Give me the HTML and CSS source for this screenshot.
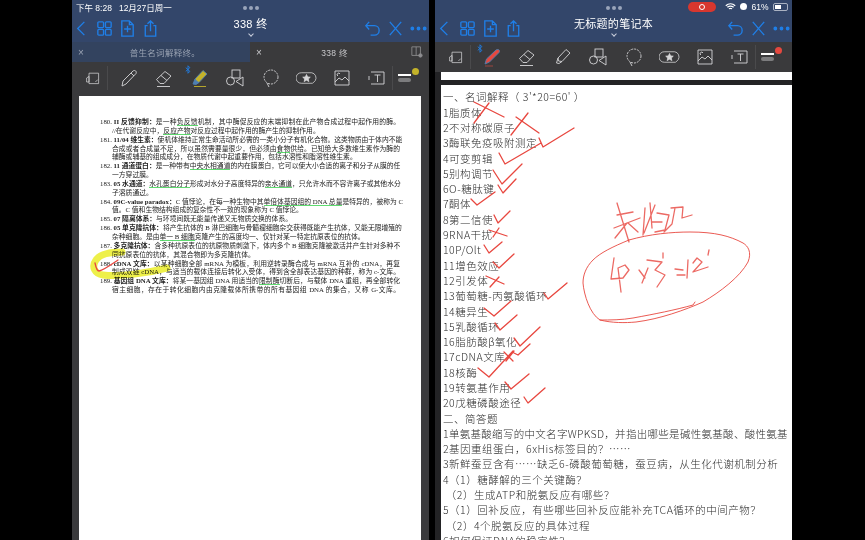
FILE: index.html
```html
<!DOCTYPE html>
<html lang="zh-CN">
<head>
    <meta charset="UTF-8">
    <title>笔记</title>
    <link rel="stylesheet" href="styles.css">
</head>
<body>
    <svg class="defs" width="0" height="0">
        <symbol id="i-back" viewBox="0 0 20 20"><path d="M13 3 6 10l7 7"/></symbol>
        <symbol id="i-grid" viewBox="0 0 20 20"><rect x="3" y="3" width="6" height="6" rx="1"/><rect x="11" y="3" width="6" height="6" rx="1"/><rect x="3" y="11" width="6" height="6" rx="1"/><rect x="11" y="11" width="6" height="6" rx="1"/></symbol>
        <symbol id="i-add" viewBox="0 0 20 20"><path d="M4 2h8l4 4v12H4zM12 2v4h4M10 7v7M6.500 10.500h7"/></symbol>
        <symbol id="i-share" viewBox="0 0 20 20"><path d="M7 7H4.500v11h11V7H13M10 13V2M6.800 5 10 2l3.200 3"/></symbol>
        <symbol id="i-undo" viewBox="0 0 20 20"><path d="M6.500 3 3 7l3.500 4M3 7h9a5 5 0 0 1 0 10H8"/></symbol>
        <symbol id="i-x" viewBox="0 0 20 20"><path d="M4 3l12 14M16 3 4 17"/></symbol>
        <symbol id="i-dots" viewBox="0 0 20 20"><circle cx="3.500" cy="10" r="1.300" class="solid"/><circle cx="10" cy="10" r="1.300" class="solid"/><circle cx="16.500" cy="10" r="1.300" class="solid"/></symbol>
        <symbol id="i-bt" viewBox="0 0 8 12"><path d="M1 3.500 6.500 8.500 4 11V1l2.500 2.500L1 8.500"/></symbol>
        <symbol id="t-reader" viewBox="0 0 20 20"><path d="M5 4h12v13H5zM2 10l3-2v7H2zM13 15l3-3"/></symbol>
        <symbol id="t-eraser" viewBox="0 0 20 20"><path d="M2.500 11.500 11 3.500l6 4.500-7 7.500H6zM7 7.500l6 5M3 18.500h13"/></symbol>
        <symbol id="t-marker" viewBox="0 0 20 20"><path d="M5 11 13 2.500l4 3.500-8 8.500-3.500-.5zM5 11l-1.500 5 2.500.5 3-2"/></symbol>
        <symbol id="t-shapes" viewBox="0 0 20 20"><rect x="7" y="2" width="8" height="8"/><circle cx="5.500" cy="13" r="4"/><path d="M18 9v9l-7-4.500z"/></symbol>
        <symbol id="t-lasso" viewBox="0 0 20 20"><circle cx="10" cy="9" r="7" stroke-dasharray="2 1"/><path d="M6 15l2 4"/></symbol>
        <symbol id="t-star" viewBox="0 0 24 20"><path d="M6 4h12a6 6 0 0 1 4 9l-3 3H6a6 6 0 0 1 0-12z"/><path class="solid" d="m12 6 1.300 2.800 3 .3-2.300 2 .7 3-2.700-1.600-2.700 1.600.7-3-2.300-2 3-.3z"/></symbol>
        <symbol id="t-image" viewBox="0 0 20 20"><path d="M3 3h14v14H3zM3 14l4-4 3 2 3-3 4 4M6 8a1.500 1.500 0 1 1 2-2"/></symbol>
        <symbol id="t-text" viewBox="0 0 20 20"><path d="M4 4h13v12H4M2 8v4"/><path d="M7.500 7h6M10.500 7v7" class="bold"/></symbol>
    </svg>

    <main class="screen">
        <section class="panel">
            <div class="top">
                <div class="status">
                    <span>下午 8:28</span>
                    <span>12月27日周一</span>
                </div>
                <span class="grip"></span>
                <div class="nav">
                    <div class="nav-group">
                        <svg class="nav-icon"><use href="#i-back"/></svg>
                        <svg class="nav-icon"><use href="#i-grid"/></svg>
                        <svg class="nav-icon"><use href="#i-add"/></svg>
                        <svg class="nav-icon"><use href="#i-share"/></svg>
                    </div>
                    <div class="title">338 终<span class="chev"></span></div>
                    <div class="nav-group">
                        <svg class="nav-icon"><use href="#i-undo"/></svg>
                        <svg class="nav-icon"><use href="#i-x"/></svg>
                        <svg class="nav-icon"><use href="#i-dots"/></svg>
                    </div>
                </div>
            </div>
            <div class="tabs">
                <div class="tab"><span class="tab-x">×</span><span class="tab-name">普生名词解释终。</span></div>
                <div class="tab active"><span class="tab-x">×</span><span class="tab-name">338 终</span>
                    <svg class="tab-side" viewBox="0 0 14 14"><path d="M1 1h10v10H1zM6 1v10"/><circle cx="11" cy="11" r="2" class="solid"/></svg>
                </div>
            </div>
            <div class="toolbar">
                <svg class="tool small"><use href="#t-reader"/></svg>
                <span class="sep"></span>
                <svg class="tool" viewBox="0 0 20 20"><path d="M3 18l1-5L14 3c2-1.500 4 .5 3 2.500L7 16z"/><path d="M12 5l3 3"/></svg>
                <svg class="tool"><use href="#t-eraser"/></svg>
                <span class="tool-wrap">
                    <svg class="bt"><use href="#i-bt"/></svg>
                    <svg class="tool" viewBox="0 0 20 20"><path d="M5 11 13 2.500l4 3.500-8 8.500-3.500-.5z" fill="#c3b22a" stroke="#4f7fb0"/><path d="M5 11l-2 5 3 .5 3-2" fill="#4f7fb0" stroke="#4f7fb0"/><path d="M4 18.500h12" stroke="#c3b22a"/></svg>
                </span>
                <svg class="tool"><use href="#t-shapes"/></svg>
                <svg class="tool"><use href="#t-lasso"/></svg>
                <svg class="tool wide"><use href="#t-star"/></svg>
                <svg class="tool"><use href="#t-image"/></svg>
                <svg class="tool"><use href="#t-text"/></svg>
                <span class="sep last"></span>
                <span class="swatch"><span class="dot yellow"></span><i class="bar"></i><i class="bar fat"></i></span>
            </div>
            <div class="sheet-wrap left-wrap">
                <article class="doc">
                    <p class="ln first">180. <b>II 反馈抑制：</b>是一种<u>负反馈</u>机制，其中酶促反应的末端抑制在此产物合成过程中起作用的酶。</p>
                    <p class="ln cont end">//在代谢反应中，<u>反应产物</u>对反应过程中起作用的酶产生的抑制作用。</p>
                    <p class="ln first">181. <b>11/04 维生素：</b>使机体维持正常生命活动所必需的一类小分子有机化合物。这类物质由于体内不能</p>
                    <p class="ln cont">合成或者合成量不足，所以虽然需要量很少，但必须由<u>食物</u>供给。已知绝大多数维生素作为酶的</p>
                    <p class="ln cont end">辅酶或辅基的组成成分，在物质代谢中起重要作用，包括水溶性和脂溶性维生素。</p>
                    <p class="ln first">182. <b>11 通道蛋白：</b>是一种带有<u>中央水相通道</u>的内在膜蛋白，它可以使大小合适的离子和分子从膜的任</p>
                    <p class="ln cont end">一方穿过膜。</p>
                    <p class="ln first">183. <b>05 水通道：</b><u>水孔蛋白分子</u>形成对水分子高度特异的<u>亲水通道</u>，只允许水而不容许离子或其他水分</p>
                    <p class="ln cont end">子溶质通过。</p>
                    <p class="ln first">184. <b>09C-value paradox：</b>C 值悖论，在每一种生物中其<u>单倍体基因组的 DNA 总量</u>是特异的，被称为 C</p>
                    <p class="ln cont end">值。C 值和生物结构组成的复杂性不一致的现象称为 C 值悖论。</p>
                    <p class="ln first end">185. <b>07 隔离体系：</b>与环境间既无能量传递又无物质交换的体系。</p>
                    <p class="ln first">186. <b>05 单克隆抗体：</b>将产生抗体的 B 淋巴细胞与骨髓瘤细胞杂交获得既能产生抗体，又能无限增殖的</p>
                    <p class="ln cont end">杂种细胞。是由<u>单一 B 细胞</u>克隆产生的高度均一、仅针对某一特定抗原表位的抗体。</p>
                    <p class="ln first">187. <b>多克隆抗体：</b>含多种抗原表位的抗原物质刺激下，体内多个 B 细胞克隆被激活并产生针对多种不</p>
                    <p class="ln cont end">同抗原表位的抗体，其混合物即为多克隆抗体。</p>
                    <p class="ln first">188. <b>cDNA 文库：</b>以某种细胞全部 mRNA 为模板，利用逆转录酶合成与 mRNA 互补的 cDNA，再复</p>
                    <p class="ln cont">制成双链 cDNA，与适当的载体连接后转化入受体，得到含全部表达基因的种群，称为 c-文库。</p>
                    <p class="ln first">189. <b>基因组 DNA 文库：</b>将某一基因组 DNA 用适当的<u>限制酶</u>切断后，与载体 DNA 重组，再全部转化</p>
                    <p class="ln cont">宿主细胞，存在于转化细胞内由克隆载体所携带的所有基因组 DNA 的集合，又称 G-文库。</p>
                </article>
                <svg class="ink" viewBox="79 96 342 444">
                    <path class="yellow-ink" d="M122 252C112 252 100 254 96 260 91 267 95 274 103 275 120 277 148 273 167 268"/>
                    <path class="red-ink" d="M95 263C96 268 97 271 99 271 104 270 112 264 118 260"/>
                </svg>
            </div>
        </section>

        <section class="panel">
            <div class="top">
                <div class="status right">
                    <span class="rec"><i></i></span>
                    <svg class="wifi" viewBox="0 0 14 10"><path d="M1 4c3.500-3.200 8.500-3.200 12 0M3 6c2.500-2 5.500-2 8 0M5 8c1.200-.8 2.800-.8 4 0"/></svg>
                    <span class="moon"></span>
                    <span>61%</span>
                    <span class="battery"><i></i></span>
                </div>
                <span class="grip"></span>
                <div class="nav">
                    <div class="nav-group">
                        <svg class="nav-icon"><use href="#i-back"/></svg>
                        <svg class="nav-icon"><use href="#i-grid"/></svg>
                        <svg class="nav-icon"><use href="#i-add"/></svg>
                        <svg class="nav-icon"><use href="#i-share"/></svg>
                    </div>
                    <div class="title">无标题的笔记本<span class="chev"></span></div>
                    <div class="nav-group">
                        <svg class="nav-icon"><use href="#i-undo"/></svg>
                        <svg class="nav-icon"><use href="#i-x"/></svg>
                        <svg class="nav-icon"><use href="#i-dots"/></svg>
                    </div>
                </div>
            </div>
            <div class="toolbar short">
                <svg class="tool small"><use href="#t-reader"/></svg>
                <span class="sep"></span>
                <span class="tool-wrap">
                    <svg class="bt"><use href="#i-bt"/></svg>
                    <svg class="tool" viewBox="0 0 20 20"><path d="M3 17l1.500-5L14 3c2.500-1.500 4.500.5 3 2.500L7.500 15z" fill="#e5483f" stroke="#4f7fb0"/><path d="M3 19h8" stroke="#a8483f"/></svg>
                </span>
                <svg class="tool"><use href="#t-eraser"/></svg>
                <svg class="tool"><use href="#t-marker"/></svg>
                <svg class="tool"><use href="#t-shapes"/></svg>
                <svg class="tool"><use href="#t-lasso"/></svg>
                <svg class="tool wide"><use href="#t-star"/></svg>
                <svg class="tool"><use href="#t-image"/></svg>
                <svg class="tool"><use href="#t-text"/></svg>
                <span class="sep last"></span>
                <span class="swatch"><span class="dot red"></span><i class="bar"></i><i class="bar fat"></i></span>
            </div>
            <div class="sheet-wrap">
                <div class="sheet-end"></div>
                <article class="notes">
                    <p>一、名词解释（ 3'*20=60' ）</p>
                    <p>1脂质体</p>
                    <p>2不对称碳原子</p>
                    <p>3酶联免疫吸附测定</p>
                    <p>4可变剪辑</p>
                    <p>5别构调节</p>
                    <p>6O-糖肽键</p>
                    <p>7酮体</p>
                    <p>8第二信使</p>
                    <p>9RNA干扰</p>
                    <p>10P/Olt</p>
                    <p>11增色效应</p>
                    <p>12引发体</p>
                    <p>13葡萄糖-丙氨酸循环</p>
                    <p>14糖异生</p>
                    <p>15乳酸循环</p>
                    <p>16脂肪酸β氧化</p>
                    <p>17cDNA文库</p>
                    <p>18核酶</p>
                    <p>19转氨基作用</p>
                    <p>20戊糖磷酸途径</p>
                    <p>二、简答题</p>
                    <p class="tight">1单氨基酸缩写的中文名字WPKSD，并指出哪些是碱性氨基酸、酸性氨基</p>
                    <p>2基因重组蛋白，6xHis标签目的？……</p>
                    <p>3新鲜蚕豆含有……缺乏6-磷酸葡萄糖，蚕豆病，从生化代谢机制分析</p>
                    <p>4（1）糖酵解的三个关键酶？</p>
                    <p>&nbsp;（2）生成ATP和脱氨反应有哪些？</p>
                    <p>5（1）回补反应，有些哪些回补反应能补充TCA循环的中间产物？</p>
                    <p>&nbsp;（2）4个脱氨反应的具体过程</p>
                    <p>6如何保证DNA的稳定性？</p>
                </article>
                <svg class="ink" viewBox="435 72 357 468">
                    <g class="red-ink">
                        <path d="M474 102 504 117M489 103 474 123M528 113 511 135M516 117 539 133"/>
                        <path d="M539 138 543 147 574 128M499 153 505 164 541 143M493 170 502 184 522 164M498 185 503 193 516 179M471 199 477 205 495 192M494 215 498 223 510 211"/>
                        <path d="M489 230 507 236M499 228 493 237"/>
                        <path d="M484 245 489 253 502 242M493 262 499 268 514 254M486 276 504 284M499 277 490 287"/>
                        <path d="M544 293 548 299 567 283M484 308 494 316 511 301M495 323 500 330 517 315M514 338 520 346 540 327"/>
                        <path d="M504 352 513 361M514 351 506 361M514 353 518 355 530 344M478 368 489 377 513 351M505 382 511 389 529 374M524 397 528 403 545 388"/>
                        <path class="soft" d="M617 203 629 242M617 215 633 212M614 228 640 218M628 223 638 232M627 223 615 238"/>
                        <path class="soft" d="M645 208 643 235M650 203 652 228M655 205 644 233M657 213 669 215 665 230 655 232M652 222 662 222M671 208 683 207 682 218 692 215M675 208 672 224 664 232"/>
                        <path class="soft" d="M614 258 611 279 623 278 629 270 625 265 618 268 621 292M639 270 645 278M648 268 642 283M647 260 662 262 655 270 665 275 657 287M663 253 663 258M675 269 683 270M677 275 685 275M688 260 687 278M693 263 697 258 702 262 693 272 708 267M709 250 708 255"/>
                        <path class="thin" d="M629 240C612 247 600 253 593 260 586 267 583 275 583 283 584 295 590 314 600 320 612 323 625 323 636 322 660 319 685 310 703 302 720 292 740 277 748 262 752 252 748 246 743 243 730 236 715 232 690 232 672 232 650 234 629 240"/>
                        <path class="thin" d="M600 320C610 320 622 320 633 318 655 314 675 310 693 305L695 302"/>
                    </g>
                </svg>
            </div>
        </section>
    </main>
</body>
</html>
```
FILE: styles.css
```css
* {
    box-sizing: border-box;
}

html, body {
    margin: 0;
    height: 100%;
    background: #000;
    overflow: hidden;
}

body {
    font-family: "Liberation Sans", "Noto Sans CJK SC", sans-serif;
    color: #fff;
}

p {
    margin: 0;
}

.defs {
    position: absolute;
}

.screen {
    display: flex;
    gap: 6px;
    width: 720px;
    height: 540px;
    margin-left: 72px;
}

.panel {
    display: flex;
    flex-direction: column;
    width: 357px;
    height: 540px;
    background: #3a3a3c;
}

/* status + nav */
.top {
    position: relative;
    height: 42px;
    padding: 0 1.500px 0 0;
    background: #33466a;
}

.status {
    display: flex;
    gap: 7px;
    height: 13px;
    padding: 0 3px 0 4px;
    align-items: center;
    font-size: 8.500px;
}

.status.right {
    justify-content: flex-end;
    gap: 4px;
}

.grip {
    position: absolute;
    left: 171px;
    top: 6px;
    width: 4px;
    height: 4px;
    border-radius: 50%;
    background: #9aa5ba;
    box-shadow: 6px 0 #9aa5ba, 12px 0 #9aa5ba;
}

.rec {
    display: flex;
    align-items: center;
    justify-content: center;
    width: 28px;
    height: 10px;
    margin-right: 5px;
    border-radius: 5px;
    background: #d8372f;
}

.rec i {
    width: 6px;
    height: 6px;
    border: 1.500px solid #fff;
    border-radius: 50%;
}

.wifi {
    width: 11px;
    height: 9px;
    fill: none;
    stroke: #fff;
    stroke-width: 1.500;
}

.moon {
    width: 7px;
    height: 7px;
    border-radius: 50%;
    background: #fff;
}

.battery {
    display: block;
    width: 15px;
    height: 8px;
    padding: 1px;
    border: 1px solid #aab2c2;
    border-radius: 2px;
}

.battery i {
    display: block;
    width: 60%;
    height: 100%;
    background: #fff;
}

.nav {
    display: flex;
    justify-content: space-between;
    align-items: center;
    height: 28px;
    margin-top: 1px;
}

.nav-group {
    display: flex;
    gap: 4px;
    color: #1f7fe8;
}

.nav-icon {
    width: 19px;
    height: 19px;
    fill: none;
    stroke: #1f7fe8;
    stroke-width: 1.400;
}

.solid {
    fill: currentColor;
}

.title {
    position: absolute;
    left: 0;
    right: 0;
    top: 16px;
    font-size: 11px;
    line-height: 16px;
    text-align: center;
    letter-spacing: 0.300px;
}

.chev {
    display: block;
    width: 4px;
    height: 4px;
    margin: 0 auto;
    border-right: 1px solid #c8cedb;
    border-bottom: 1px solid #c8cedb;
    transform: rotate(45deg);
}

/* tabs (left panel only) */
.tabs {
    display: flex;
    height: 20px;
    background: #33435f;
    font-size: 8.500px;
    color: #9aa3b3;
}

.tab {
    display: flex;
    flex: 1;
    align-items: center;
    padding-left: 6px;
}

.tab.active {
    flex: 0 0 179px;
    background: #3a3a3c;
    color: #c9c9cc;
}

.tab-x {
    font-size: 10px;
}

.tab-name {
    flex: 1;
    text-align: center;
    padding-right: 4px;
    letter-spacing: 0.300px;
}

.tab-side {
    width: 12px;
    height: 12px;
    margin-right: 6px;
    fill: none;
    stroke: #8d8d90;
    color: #8d8d90;
}

/* toolbar */
.toolbar {
    display: flex;
    align-items: center;
    height: 32px;
    padding-left: 13px;
    background: #3a3a3c;
}

.toolbar.short {
    height: 30px;
}

.tool {
    width: 20px;
    height: 20px;
    margin: 0 7.750px;
    flex: none;
    fill: none;
    stroke: #d6d6d8;
    stroke-width: 0.900;
    color: #d6d6d8;
}

.tool .bold {
    stroke-width: 2;
}

.tool.small {
    width: 16px;
    height: 16px;
    margin: 0;
}

.tool.wide {
    width: 21px;
    margin: 0 7.250px;
}

.tool-wrap {
    position: relative;
    display: flex;
}

.bt {
    position: absolute;
    left: 3px;
    top: -3px;
    width: 6px;
    height: 9px;
    fill: none;
    stroke: #1f7fe8;
    stroke-width: 1.200;
}

.sep {
    width: 1px;
    height: 24px;
    margin: 0 3px 0 6px;
    background: #4a4a4c;
}

.sep.last {
    margin: 0 5px 0 -3px;
}

.swatch {
    position: relative;
    display: flex;
    flex-direction: column;
    gap: 2px;
    width: 22px;
}

.bar {
    display: block;
    width: 13px;
    height: 2px;
    background: #fff;
}

.bar.fat {
    height: 4px;
    border-radius: 2px;
    background: #7c7c7e;
}

.dot {
    position: absolute;
    left: 14px;
    top: -6px;
    width: 7px;
    height: 7px;
    border-radius: 50%;
}

.dot.yellow {
    background: #c3b22a;
}

.dot.red {
    background: #e5483f;
}

/* pages */
.sheet-wrap {
    position: relative;
    flex: 1;
    background: #232325;
}

.left-wrap {
    margin: 2px 8px 0 7px;
    background: #fff;
}

.doc {
    padding: 22px 21px 0 21px;
    font-family: "Liberation Serif", "Noto Sans CJK SC", serif;
    font-size: 6.800px;
    color: #1c1c1c;
    filter: blur(0.300px);
}

.ln {
    height: 8.850px;
    line-height: 8.850px;
    white-space: nowrap;
    text-align: justify;
    text-align-last: justify;
}

.ln.cont {
    margin-left: 12px;
}

.ln.end {
    text-align-last: left;
}

.ln u {
    text-decoration: none;
    border-bottom: 1px solid #5fdc70;
}

.sheet-end {
    height: 8px;
    margin: 0 0 5px 6px;
    background: #fff;
}

.notes {
    height: 455px;
    margin-left: 6px;
    padding: 4.350px 0 0 2px;
    overflow: hidden;
    background: #fff;
    font-family: "Noto Sans CJK SC", sans-serif;
    font-weight: 300;
    font-size: 10.500px;
    line-height: 15.300px;
    letter-spacing: 0.500px;
    color: #2c2c2c;
    white-space: nowrap;
    filter: blur(0.300px);
}

.notes .tight {
    letter-spacing: 0.300px;
}

/* handwriting on top of the pages */
.ink {
    position: absolute;
    left: 0;
    top: 0;
    width: 100%;
    height: 100%;
    pointer-events: none;
    fill: none;
}

.red-ink {
    stroke: #e8473f;
    stroke-width: 1.300;
    stroke-linecap: round;
    stroke-linejoin: round;
    fill: none;
}

.red-ink .soft {
    stroke: #ec6a64;
    stroke-width: 1.300;
}

.red-ink .thin {
    stroke-width: 0.900;
}

.yellow-ink {
    stroke: #eef04a;
    stroke-width: 7;
    stroke-linecap: round;
    fill: none;
    mix-blend-mode: multiply;
}
```
